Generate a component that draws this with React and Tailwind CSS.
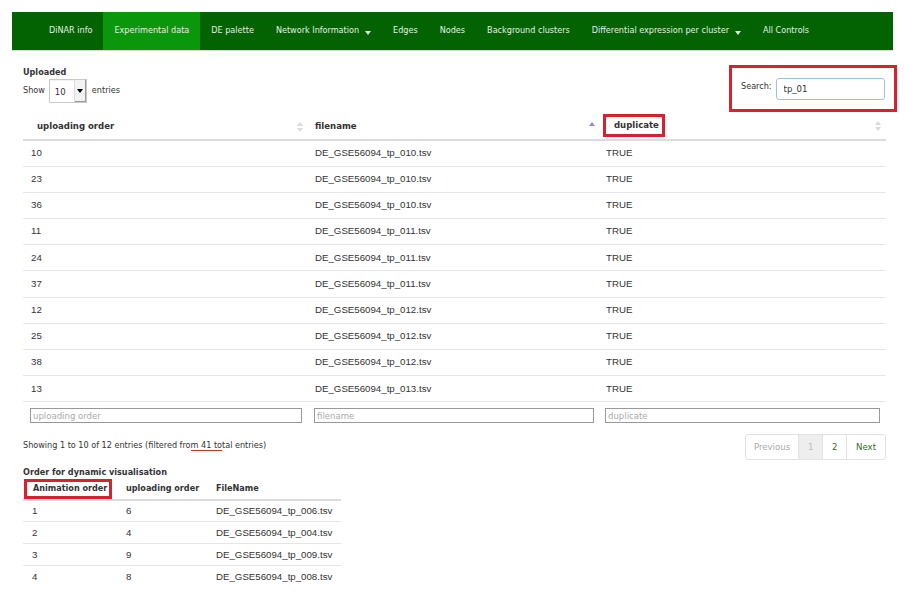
import { useState } from "react";

const tahoma = "font-['DejaVu_Sans_Condensed','DejaVu_Sans',sans-serif]";
const arial = "font-['Liberation_Sans',Arial,sans-serif]";

const navItems = [
  { label: "DiNAR info" },
  { label: "Experimental data", active: true },
  { label: "DE palette" },
  { label: "Network Information", caret: true },
  { label: "Edges" },
  { label: "Nodes" },
  { label: "Background clusters" },
  { label: "Differential expression per cluster", caret: true },
  { label: "All Controls" },
];

const uploaded = [
  ["10", "DE_GSE56094_tp_010.tsv", "TRUE"],
  ["23", "DE_GSE56094_tp_010.tsv", "TRUE"],
  ["36", "DE_GSE56094_tp_010.tsv", "TRUE"],
  ["11", "DE_GSE56094_tp_011.tsv", "TRUE"],
  ["24", "DE_GSE56094_tp_011.tsv", "TRUE"],
  ["37", "DE_GSE56094_tp_011.tsv", "TRUE"],
  ["12", "DE_GSE56094_tp_012.tsv", "TRUE"],
  ["25", "DE_GSE56094_tp_012.tsv", "TRUE"],
  ["38", "DE_GSE56094_tp_012.tsv", "TRUE"],
  ["13", "DE_GSE56094_tp_013.tsv", "TRUE"],
];

const order = [
  ["1", "6", "DE_GSE56094_tp_006.tsv"],
  ["2", "4", "DE_GSE56094_tp_004.tsv"],
  ["3", "9", "DE_GSE56094_tp_009.tsv"],
  ["4", "8", "DE_GSE56094_tp_008.tsv"],
];

function SortIcon({ dir }) {
  return (
    <svg width="6" height="10" viewBox="0 0 6 10" className="shrink-0">
      <path d="M3 0 L6 4 L0 4 Z" fill={dir === "asc" ? "#8a8fb5" : "#dcdcdc"} />
      {dir !== "asc" && <path d="M3 10 L6 6 L0 6 Z" fill="#dcdcdc" />}
    </svg>
  );
}

function Caret() {
  return <span className="ml-[6px] inline-block border-x-[3px] border-t-[4px] border-x-transparent border-t-[#dfeedf] translate-y-[2px]" />;
}

export default function App() {
  const [search, setSearch] = useState("tp_01");

  return (
    <div className={`min-h-[592px] bg-white px-3 pt-3 ${arial}`}>
      {/* Navbar */}
      <nav className={`h-[38px] bg-[#036303] flex pl-[26px] shadow-[0_1px_1px_rgba(0,0,0,0.15)] ${tahoma}`}>
        {navItems.map((item) => (
          <div
            key={item.label}
            className={`px-[11px] h-full flex items-center text-[9px] text-[#e3f0e3] ${
              item.active ? "bg-[#0b970b]" : ""
            }`}
          >
            {item.label}
            {item.caret && <Caret />}
          </div>
        ))}
      </nav>

      <div className="px-[11px] pt-[16px]">
        {/* Uploaded table controls */}
        <div className="flex justify-between items-start">
          <div className={`${tahoma} text-[9px] text-[#333]`}>
            <div className="font-bold leading-[12px]">Uploaded</div>
            <div className="flex items-center mt-[1px]">
              <span>Show</span>
              <div className="ml-[4px] w-[38px] h-[24px] border border-[#c9c9c9] flex items-center bg-white shadow-[inset_0_1px_1px_rgba(0,0,0,0.05)]">
                <span className="pl-[5px] pt-[3px] flex-1 text-[9.5px]">10</span>
                <div className="w-[12px] h-full border-l border-[#ddd] flex items-center justify-center bg-[#f3f3f3] shadow-[inset_-1px_-1px_0_#999]">
                  <span className="inline-block border-x-[3px] border-t-[4px] border-x-transparent border-t-black" />
                </div>
              </div>
              <span className="ml-[5px]">entries</span>
            </div>
          </div>

          <div className="mr-[-15px] mt-[-1px] border-[3px] border-[#d8212f] h-[47px] w-[168px] flex items-center pl-[9px]">
            <span className={`${tahoma} text-[9px] text-[#333] mt-[-4px]`}>Search:</span>
            <input
              value={search}
              onChange={(e) => setSearch(e.target.value)}
              className={`ml-[4px] w-[109px] h-[22px] border border-[#9fc3dd] rounded-[3px] px-[7px] text-[9.5px] text-[#333] outline-none ${tahoma}`}
            />
          </div>
        </div>

        {/* Uploaded table */}
        <table className="w-[863px] table-fixed border-collapse mt-[2px] text-[9.7px] text-[#333]">
          <colgroup>
            <col className="w-[283px]" />
            <col className="w-[292px]" />
            <col className="w-[288px]" />
          </colgroup>
          <thead>
            <tr className={`h-[26px] border-b-2 border-[#dcdcdc] ${tahoma} text-[9.5px]`}>
              <th className="text-left font-bold pl-[14px] pr-[3px]">
                <div className="flex items-center justify-between">
                  <span>uploading order</span>
                  <SortIcon />
                </div>
              </th>
              <th className="text-left font-bold pl-[9px] pr-[3px]">
                <div className="flex items-center justify-between">
                  <span>filename</span>
                  <SortIcon dir="asc" />
                </div>
              </th>
              <th className="text-left font-bold pl-[5px] pr-[5px] align-top">
                <div className="flex items-center justify-between">
                  <span className="border-[3px] border-[#d8212f] pl-[8px] pr-[3px] h-[23px] flex items-center">duplicate</span>
                  <SortIcon />
                </div>
              </th>
            </tr>
          </thead>
          <tbody>
            {uploaded.map((r, i) => (
              <tr key={i} className="h-[26.2px] border-b border-[#e6e6e6]">
                <td className="pl-[8px]">{r[0]}</td>
                <td className="pl-[9px]">{r[1]}</td>
                <td className="pl-[8px]">{r[2]}</td>
              </tr>
            ))}
          </tbody>
          <tfoot>
            <tr className={`h-[26px] ${tahoma} text-[9.5px]`}>
              <td className="pl-[7px] pr-[4px]">
                <div className="h-[15px] border border-[#999] text-[#aaa] pl-[2px] leading-[13px]">uploading order</div>
              </td>
              <td className="pl-[8px] pr-[4px]">
                <div className="h-[15px] border border-[#999] text-[#aaa] pl-[2px] leading-[13px]">filename</div>
              </td>
              <td className="pl-[7px] pr-[6px]">
                <div className="h-[15px] border border-[#999] text-[#aaa] pl-[2px] leading-[13px]">duplicate</div>
              </td>
            </tr>
          </tfoot>
        </table>

        {/* Info + pagination */}
        <div className={`flex justify-between items-start mt-[6px] w-[863px] ${tahoma} text-[9px] text-[#333]`}>
          <div className="pt-[5px]">
            Showing 1 to 10 of 12 entries (filtered fro
            <span className="border-b border-[#c0392b]">m 41 to</span>
            tal entries)
          </div>
          <div className="flex h-[26px] border border-[#e2e2e2] rounded-[3px] text-[9.5px]">
            <span className="px-[8px] flex items-center text-[#aaa]">Previous</span>
            <span className="w-[24px] flex items-center justify-center bg-[#eee] text-[#bbb] border-l border-[#e2e2e2]">1</span>
            <span className="w-[24px] flex items-center justify-center text-[#2f6e2f] border-l border-[#e2e2e2]">2</span>
            <span className="px-[9px] flex items-center text-[#2f6e2f] border-l border-[#e2e2e2]">Next</span>
          </div>
        </div>

        {/* Order table */}
        <div className={`mt-[6px] ${tahoma} text-[9px] font-bold text-[#333] leading-[12px]`}>Order for dynamic visualisation</div>
        <table className="w-[318px] table-fixed border-collapse mt-[1px] text-[9.7px] text-[#333]">
          <colgroup>
            <col className="w-[94px]" />
            <col className="w-[90px]" />
            <col className="w-[134px]" />
          </colgroup>
          <thead>
            <tr className={`h-[20px] border-b-2 border-[#dcdcdc] ${tahoma} text-[9px]`}>
              <th className="text-left font-bold pl-[1px] align-top">
                <span className="flex items-center whitespace-nowrap border-[3px] border-[#d8212f] h-[20px] w-[88px] pl-[6px]">Animation order</span>
              </th>
              <th className="text-left font-bold pl-[9px] whitespace-nowrap">uploading order</th>
              <th className="text-left font-bold pl-[9px]">FileName</th>
            </tr>
          </thead>
          <tbody>
            {order.map((r, i) => (
              <tr key={i} className={`h-[22px] ${i < order.length - 1 ? "border-b border-[#e6e6e6]" : ""}`}>
                <td className="pl-[9px]">{r[0]}</td>
                <td className="pl-[9px]">{r[1]}</td>
                <td className="pl-[9px]">{r[2]}</td>
              </tr>
            ))}
          </tbody>
        </table>
      </div>
    </div>
  );
}
